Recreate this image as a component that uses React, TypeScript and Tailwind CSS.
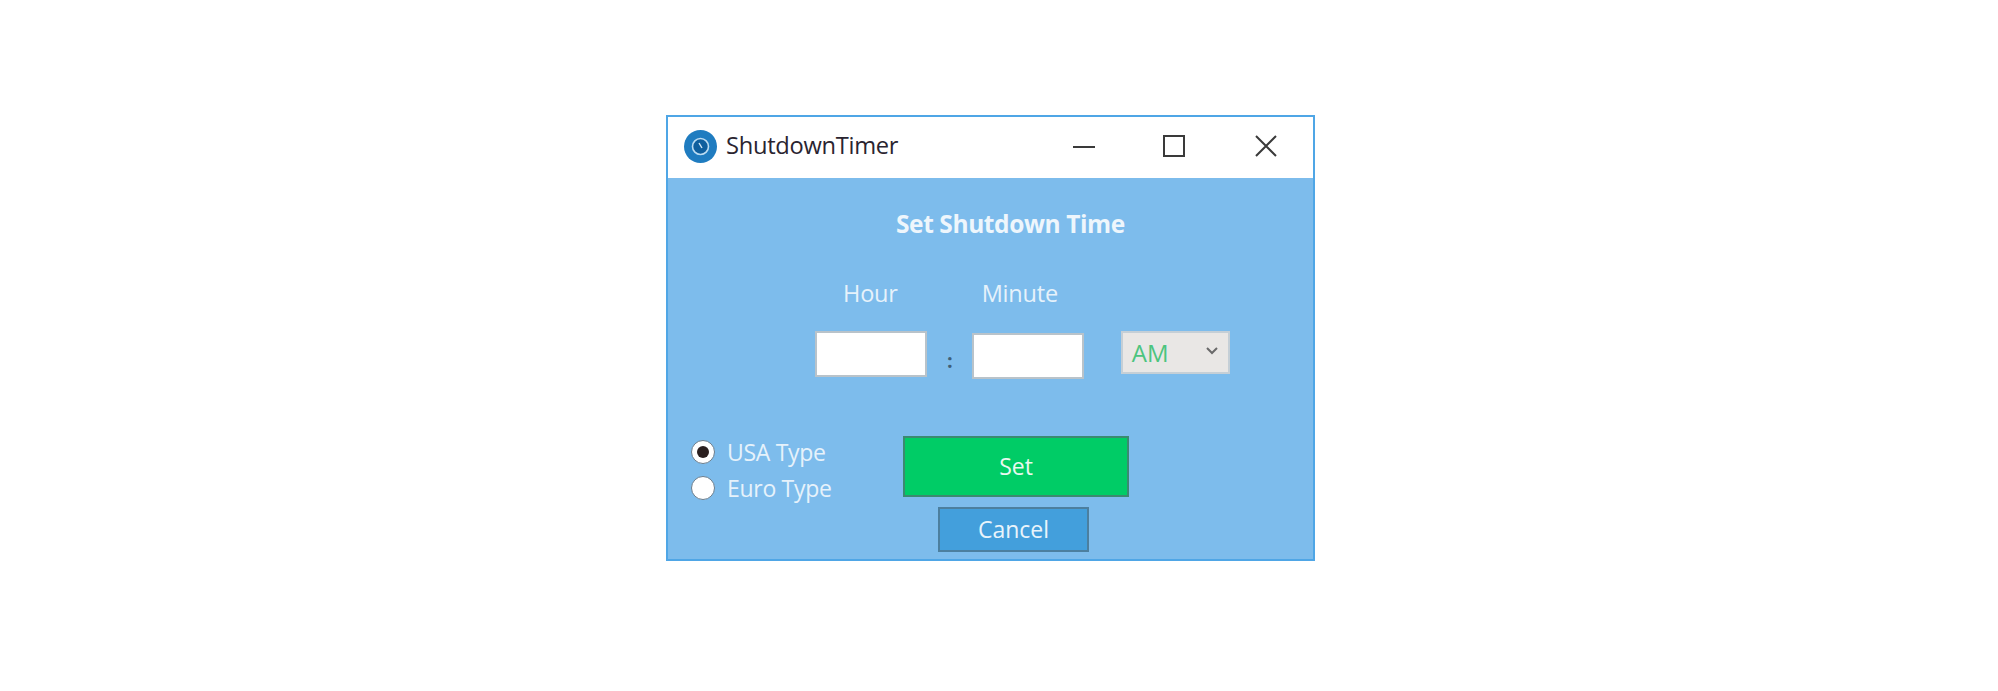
import React from 'react';

const font = { fontFamily: '"Open Sans", "Noto Sans", sans-serif' };

function TimerIcon() {
  return (
    <svg width="33" height="33" viewBox="0 0 33 33" className="shrink-0">
      <circle cx="16.5" cy="16.5" r="16.5" fill="#1f7cc0" />
      <circle cx="16.5" cy="16.5" r="8" fill="#0f5f9e" stroke="#bcdcf2" strokeWidth="1.6" />
      <path d="M15 13l3 5" stroke="#d5e8f6" strokeWidth="1.4" />
    </svg>
  );
}

function Radio({ label, checked }: { label: string; checked?: boolean }) {
  return (
    <div className="flex items-center gap-[12px] h-[36px]">
      <span className="w-[24px] h-[24px] rounded-full bg-white border border-[#6b7d8c] flex items-center justify-center">
        {checked && <span className="w-[12px] h-[12px] rounded-full bg-[#2a1f1f]" />}
      </span>
      <span className="text-[23px] text-[#e6f2fb] tracking-[-0.3px]">{label}</span>
    </div>
  );
}

export default function App() {
  return (
    <div className="min-h-[691px] bg-white pt-[115px] pl-[666px]" style={font}>
      <div className="w-[649px] h-[446px] border-2 border-[#4fa6e6] flex flex-col bg-[#7dbcec]">
        <div className="h-[61px] bg-white flex items-center pl-[16px] pb-[3px]">
          <TimerIcon />
          <span className="ml-[9px] text-[23.7px] text-[#2a2430] tracking-[-0.3px]">ShutdownTimer</span>
          <div className="ml-auto flex items-center">
            <svg width="24" height="24" viewBox="0 0 24 24" className="mr-[67px]">
              <path d="M1 13h22" stroke="#3a3a3a" strokeWidth="2" />
            </svg>
            <svg width="22" height="22" viewBox="0 0 22 22" className="mr-[69px]">
              <rect x="1" y="1" width="20" height="20" fill="none" stroke="#3a3a3a" strokeWidth="2" />
            </svg>
            <svg width="24" height="24" viewBox="0 0 24 24" className="mr-[35px]">
              <path d="M2 2l20 20M22 2L2 22" stroke="#3a3a3a" strokeWidth="2" />
            </svg>
          </div>
        </div>

        <div className="flex-1 flex flex-col">
          <h1 className="mt-[30px] ml-[228px] text-[24.5px] leading-[32px] font-bold text-[#eef6fc] tracking-[-0.4px]">
            Set Shutdown Time
          </h1>

          <div className="mt-[37px] flex text-[23.5px] leading-[32px] text-[#e6f2fb] tracking-[-0.2px]">
            <span className="ml-[175px]">Hour</span>
            <span className="ml-[84px]">Minute</span>
          </div>

          <div className="mt-[22px] flex items-start">
            <div className="ml-[147px] w-[112px] h-[46px] bg-white border-2 border-[#b9c3ca]" />
            <span className="ml-[20px] mt-[15px] text-[20px] leading-[30px] font-bold text-[#3f5f78]">:</span>
            <div className="ml-[19px] mt-[2px] w-[112px] h-[46px] bg-white border-2 border-[#b9c3ca]" />
            <div className="ml-[37px] w-[109px] h-[43px] bg-[#e9e7e5] border-2 border-[#c5cfd6] flex items-center pl-[9px]">
              <span className="text-[24px] text-[#4cc47e]">AM</span>
              <svg width="14" height="10" viewBox="0 0 14 10" className="ml-auto mr-[9px] mb-[4px]">
                <path d="M2 2l5 5 5-5" fill="none" stroke="#6a6a6a" strokeWidth="2" />
              </svg>
            </div>
          </div>

          <div className="mt-[57px] flex items-start">
            <div className="ml-[23px] -mt-[2px] w-[212px]">
              <Radio label="USA Type" checked />
              <Radio label="Euro Type" />
            </div>
            <div className="flex flex-col">
              <button className="w-[226px] h-[61px] bg-[#00cc66] border-2 border-[#3b8a70] text-[23px] text-[#e9f8ef]">
                Set
              </button>
              <button className="mt-[10px] ml-[35px] w-[151px] h-[45px] bg-[#439fdc] border-2 border-[#4c7f9f] text-[23px] text-[#e9f4fb]">
                Cancel
              </button>
            </div>
          </div>
        </div>
      </div>
    </div>
  );
}
